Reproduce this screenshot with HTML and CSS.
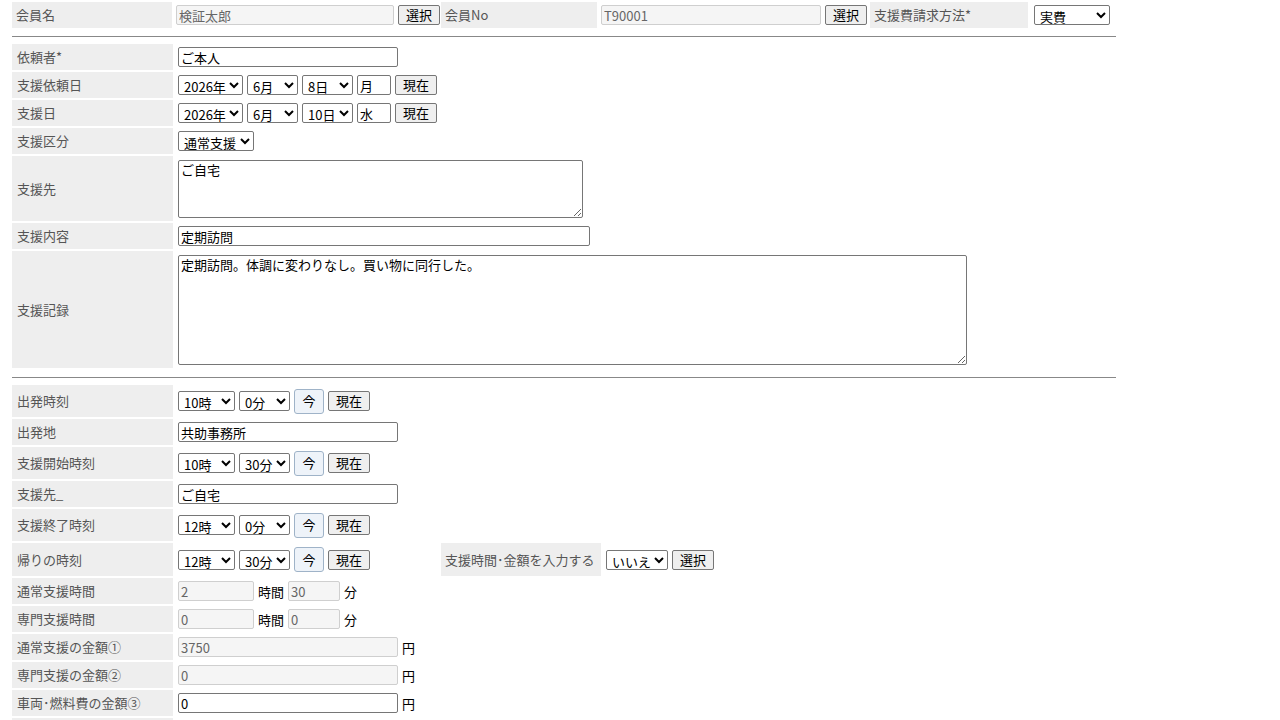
FILE: index.html
```html
<!DOCTYPE html>
<html lang="ja">
<head>
  <meta charset="UTF-8">
  <title>支援記録入力</title>
  <link rel="stylesheet" href="styles.css">
</head>
<body>
  <div class="page">
    <!-- 会員 -->
    <table class="form head">
      <tr>
        <td class="lbl w160">会員名</td>
        <td class="val v-member">
          <div class="ctl"><input class="ro w218" type="text" value="検証太郎" readonly><button>選択</button></div>
        </td>
        <td class="lbl w156">会員No</td>
        <td class="val v-no">
          <div class="ctl"><input class="ro w220" type="text" value="T90001" readonly><button>選択</button></div>
        </td>
        <td class="lbl w158">支援費請求方法*</td>
        <td class="val v-bill">
          <select class="w76"><option>実費</option></select>
        </td>
      </tr>
    </table>
    <hr>

    <!-- 依頼 -->
    <table class="form">
      <tr>
        <td class="lbl">依頼者*</td>
        <td class="val"><input class="w220" type="text" value="ご本人"></td>
      </tr>
      <tr>
        <td class="lbl">支援依頼日</td>
        <td class="val">
          <div class="ctl">
            <select class="w65"><option>2026年</option></select>
            <select class="w51"><option>6月</option></select>
            <select class="w51"><option>8日</option></select>
            <input class="w34" type="text" value="月">
            <button>現在</button>
          </div>
        </td>
      </tr>
      <tr>
        <td class="lbl">支援日</td>
        <td class="val">
          <div class="ctl">
            <select class="w65"><option>2026年</option></select>
            <select class="w51"><option>6月</option></select>
            <select class="w51"><option>10日</option></select>
            <input class="w34" type="text" value="水">
            <button>現在</button>
          </div>
        </td>
      </tr>
      <tr>
        <td class="lbl">支援区分</td>
        <td class="val"><select class="w76"><option>通常支援</option></select></td>
      </tr>
      <tr>
        <td class="lbl">支援先</td>
        <td class="val tall"><textarea class="ta-place">ご自宅</textarea></td>
      </tr>
      <tr>
        <td class="lbl">支援内容</td>
        <td class="val"><input class="w412" type="text" value="定期訪問"></td>
      </tr>
      <tr>
        <td class="lbl">支援記録</td>
        <td class="val tall"><textarea class="ta-record">定期訪問。体調に変わりなし。買い物に同行した。</textarea></td>
      </tr>
    </table>
    <hr class="sep2">

    <!-- 時刻・金額 -->
    <table class="form">
      <tr class="time-row">
        <td class="lbl">出発時刻</td>
        <td class="val" colspan="3">
          <div class="ctl">
            <select class="w57"><option>10時</option></select>
            <select class="w51"><option>0分</option></select>
            <button class="now">今</button>
            <button>現在</button>
          </div>
        </td>
      </tr>
      <tr>
        <td class="lbl">出発地</td>
        <td class="val" colspan="3"><input class="w220" type="text" value="共助事務所"></td>
      </tr>
      <tr class="time-row">
        <td class="lbl">支援開始時刻</td>
        <td class="val" colspan="3">
          <div class="ctl">
            <select class="w57"><option>10時</option></select>
            <select class="w51"><option>30分</option></select>
            <button class="now">今</button>
            <button>現在</button>
          </div>
        </td>
      </tr>
      <tr>
        <td class="lbl">支援先_</td>
        <td class="val" colspan="3"><input class="w220" type="text" value="ご自宅"></td>
      </tr>
      <tr class="time-row">
        <td class="lbl">支援終了時刻</td>
        <td class="val" colspan="3">
          <div class="ctl">
            <select class="w57"><option>12時</option></select>
            <select class="w51"><option>0分</option></select>
            <button class="now">今</button>
            <button>現在</button>
          </div>
        </td>
      </tr>
      <tr class="time-row back-row">
        <td class="lbl">帰りの時刻</td>
        <td class="val v-back">
          <div class="ctl">
            <select class="w57"><option>12時</option></select>
            <select class="w51"><option>30分</option></select>
            <button class="now">今</button>
            <button>現在</button>
          </div>
        </td>
        <td class="lbl w160">支援時間･金額を入力する</td>
        <td class="val">
          <div class="ctl">
            <select class="w62"><option>いいえ</option></select>
            <button>選択</button>
          </div>
        </td>
      </tr>
      <tr>
        <td class="lbl">通常支援時間</td>
        <td class="val" colspan="3">
          <div class="ctl">
            <input class="ro w76" type="text" value="2" readonly><span class="unit">時間</span><input class="ro w52" type="text" value="30" readonly><span class="unit">分</span>
          </div>
        </td>
      </tr>
      <tr>
        <td class="lbl">専門支援時間</td>
        <td class="val" colspan="3">
          <div class="ctl">
            <input class="ro w76" type="text" value="0" readonly><span class="unit">時間</span><input class="ro w52" type="text" value="0" readonly><span class="unit">分</span>
          </div>
        </td>
      </tr>
      <tr>
        <td class="lbl">通常支援の金額①</td>
        <td class="val" colspan="3">
          <div class="ctl"><input class="ro w220" type="text" value="3750" readonly><span class="unit">円</span></div>
        </td>
      </tr>
      <tr>
        <td class="lbl">専門支援の金額②</td>
        <td class="val" colspan="3">
          <div class="ctl"><input class="ro w220" type="text" value="0" readonly><span class="unit">円</span></div>
        </td>
      </tr>
      <tr>
        <td class="lbl">車両･燃料費の金額③</td>
        <td class="val" colspan="3">
          <div class="ctl"><input class="w220" type="text" value="0"><span class="unit">円</span></div>
        </td>
      </tr>
      <tr>
        <td class="lbl"></td>
        <td class="val" colspan="3"></td>
      </tr>
    </table>
  </div>
</body>
</html>
```

FILE: styles.css
```css
/* 支援記録入力フォーム */
body {
  margin: 0;
  font-family: "Noto Sans CJK JP", "Liberation Sans", sans-serif;
  font-size: 13px;
  color: #000;
  background: #fff;
}

.page {
  width: 1104px;
  padding-left: 12px;
}

hr {
  border: 0;
  border-top: 1px solid #888;
  height: 0;
  margin: 6px 0 5px;
}

hr.sep2 {
  margin: 7px 0 5px;
}

.form {
  border-collapse: separate;
  border-spacing: 0 2px;
}

.form td {
  padding: 0;
  height: 26px;
  vertical-align: middle;
}

.form .time-row td {
  height: 32px;
}

.form .back-row td {
  height: 33px;
}

.lbl {
  width: 156px;
  padding-left: 5px !important;
  background-color: #eee;
  color: #555;
  white-space: nowrap;
  line-height: 16px;
}

.val {
  padding-left: 5px !important;
  white-space: nowrap;
}

.val.tall {
  padding-top: 4px !important;
  padding-bottom: 3px !important;
  vertical-align: top;
}

.v-back {
  width: 263px;
}

/* 会員行 */
.head .lbl {
  padding-left: 4px !important;
}

.head .val {
  padding-left: 4px !important;
}

.head .w160 { width: 156px; }
.head .w156 { width: 152px; }
.head .w158 { width: 154px; }

.v-member { width: 265px; }
.v-no { width: 269px; }
.head .v-bill { padding-left: 6px !important; width: 76px; }

.form td.w160 {
  width: 156px;
  padding-left: 4px !important;
}

.ctl {
  display: flex;
  align-items: center;
  gap: 4px;
}

/* 入力部品 */
input[type="text"],
select,
textarea,
button {
  font-family: "Noto Sans CJK JP", "Liberation Sans", sans-serif;
  font-size: 13px;
  box-sizing: border-box;
  margin: 0;
}

input[type="text"] {
  height: 20px;
  padding: 0 2px;
  border: 1px solid #767676;
  border-radius: 2px;
  color: #000;
  background: #fff;
  line-height: 18px;
}

input.ro {
  background: #f5f5f5;
  border-color: #cfcfcf;
  color: #666;
}

select {
  height: 20px;
  padding: 0 0 0 1px;
  border: 1px solid #767676;
  border-radius: 2px;
  background: #fff;
  color: #000;
}

button {
  height: 20px;
  padding: 0 7px;
  border: 1px solid #767676;
  border-radius: 2px;
  background: #efefef;
  color: #000;
  line-height: 16px;
}

button.now {
  width: 30px;
  height: 25px;
  padding: 0;
  border: 1px solid #9fb3c8;
  border-radius: 3px;
  background: #eef3f9;
}

textarea {
  display: block;
  padding: 1px 2px;
  border: 1px solid #767676;
  border-radius: 2px;
  resize: both;
  line-height: 16px;
}

.ta-place {
  width: 405px;
  height: 58px;
}

.ta-record {
  width: 789px;
  height: 110px;
}

.unit {
  color: #000;
}

.w34 { width: 34px; }
.w51 { width: 51px; }
.w52 { width: 52px; }
.w57 { width: 57px; }
.w62 { width: 62px; }
.w65 { width: 65px; }
.w76 { width: 76px; }
.w218 { width: 218px; }
.w220 { width: 220px; }
.w412 { width: 412px; }
```
